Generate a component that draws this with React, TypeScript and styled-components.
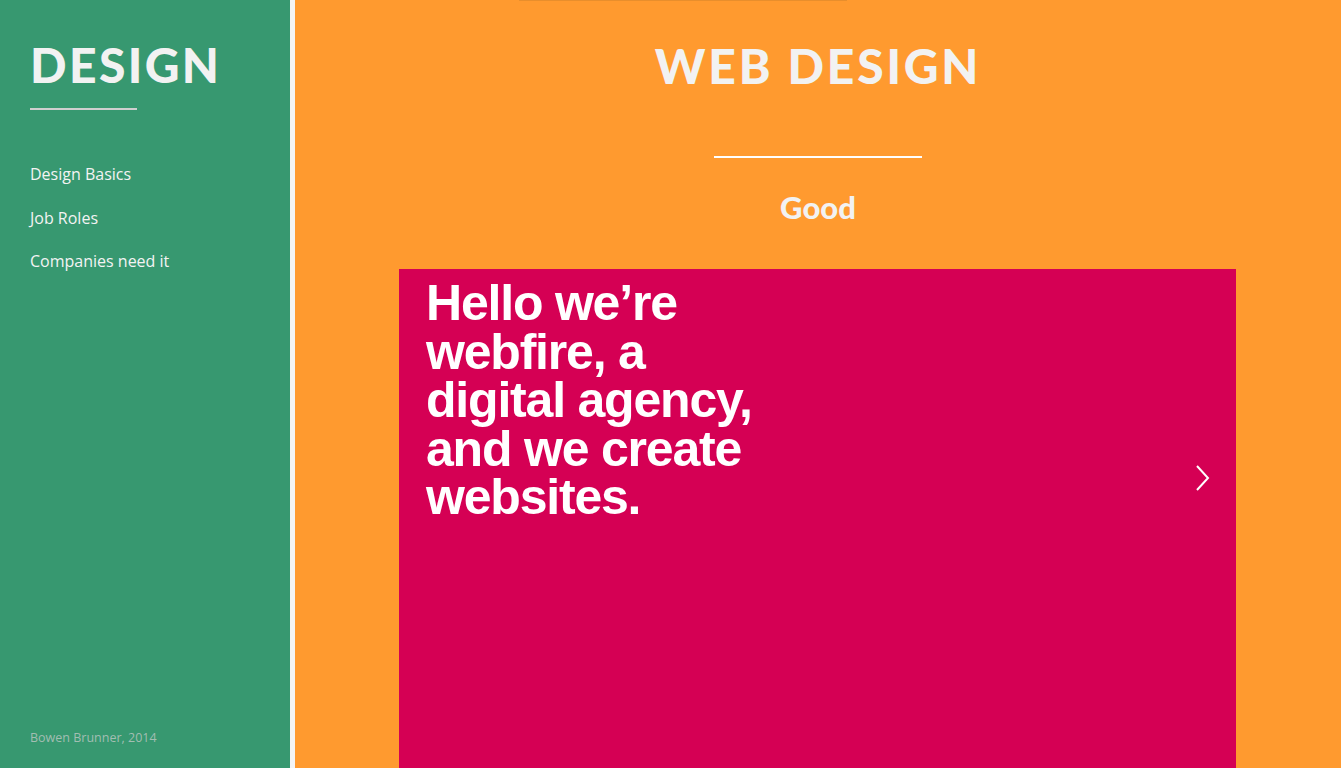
import React from "react";
import styled, { createGlobalStyle } from "styled-components";

const Global = createGlobalStyle`
  html, body { margin: 0; padding: 0; height: 100%; overflow: hidden; }
  body { font-family: "Open Sans", sans-serif; background: #ff9a2f; }
  #root { height: 100%; }
`;

const Page = styled.div`
  display: flex;
  height: 768px;
  width: 1341px;
  overflow: hidden;
`;

const Sidebar = styled.aside`
  flex: none;
  width: 295px;
  box-sizing: border-box;
  background: #379870;
  border-right: 5px solid #f4f4f4;
  display: flex;
  flex-direction: column;
  padding: 37px 30px 22px;
`;

const Brand = styled.h1`
  margin: 0;
  font-family: Lato, sans-serif;
  font-weight: 900;
  font-size: 48px;
  line-height: 56px;
  letter-spacing: 2.4px;
  color: #f2f2f2;
`;

const Rule = styled.hr<{ $w: number; $color: string; $top: number }>`
  width: ${(p) => p.$w}px;
  height: 2px;
  border: 0;
  margin: ${(p) => p.$top}px 0 0;
  background: ${(p) => p.$color};
`;

const Nav = styled.nav`
  display: flex;
  flex-direction: column;
  gap: 21.5px;
  margin-top: 53px;
`;

const NavLink = styled.a`
  font-family: "Open Sans", sans-serif;
  font-size: 16px;
  line-height: 22px;
  color: #f3f3f3;
  text-decoration: none;
`;

const Footer = styled.div`
  margin-top: auto;
  font-family: "Open Sans", sans-serif;
  font-size: 12.5px;
  color: rgba(205, 205, 205, 0.72);
`;

const Main = styled.main`
  flex: 1;
  position: relative;
  display: flex;
  flex-direction: column;
  align-items: center;
  padding-top: 38px;
  background: #ff9a2f;
`;

const TopEdge = styled.div`
  position: absolute;
  top: 0;
  left: 224px;
  width: 328px;
  height: 1px;
  background: #e88e2c;
`;

const Title = styled.h2`
  margin: 0;
  font-family: Lato, sans-serif;
  font-weight: 900;
  font-size: 48px;
  line-height: 56px;
  letter-spacing: 2.8px;
  color: #f2f2f2;
`;

const Subtitle = styled.h3`
  margin: 31px 0 0;
  font-family: Lato, sans-serif;
  font-weight: 900;
  font-size: 31px;
  line-height: 36px;
  color: #f2f2f2;
`;

const Slide = styled.section`
  margin-top: 44px;
  width: 837px;
  flex: 1;
  align-self: flex-start;
  margin-left: 104px;
  background: #d50054;
  display: flex;
  align-items: flex-start;
  justify-content: space-between;
  padding: 10px 24px 0 27px;
  box-sizing: border-box;
`;

const Headline = styled.p`
  margin: 0;
  font-family: "Liberation Sans", Arial, sans-serif;
  font-weight: 700;
  font-size: 50px;
  line-height: 48.5px;
  letter-spacing: -1.2px;
  color: #ffffff;
`;

const Arrow = styled.button`
  margin-top: 185px;
  border: 0;
  background: none;
  padding: 0;
  width: 20px;
  height: 28px;
  cursor: pointer;
`;

export default function App() {
  return (
    <Page>
      <Global />
      <Sidebar>
        <Brand>DESIGN</Brand>
        <Rule $w={107} $color="#cfcfcf" $top={15} />
        <Nav>
          <NavLink href="#">Design Basics</NavLink>
          <NavLink href="#">Job Roles</NavLink>
          <NavLink href="#">Companies need it</NavLink>
        </Nav>
        <Footer>Bowen Brunner, 2014</Footer>
      </Sidebar>
      <Main>
        <TopEdge />
        <Title>WEB DESIGN</Title>
        <Rule $w={208} $color="#ffffff" $top={62} />
        <Subtitle>Good</Subtitle>
        <Slide>
          <Headline>
            Hello we’re
            <br />
            webfire, a
            <br />
            digital agency,
            <br />
            and we create
            <br />
            websites.
          </Headline>
          <Arrow aria-label="Next">
            <svg width="20" height="28" viewBox="0 0 20 28" fill="none">
              <path d="M5 2 L16 14 L5 26" stroke="#fff" strokeWidth="2" />
            </svg>
          </Arrow>
        </Slide>
      </Main>
    </Page>
  );
}
